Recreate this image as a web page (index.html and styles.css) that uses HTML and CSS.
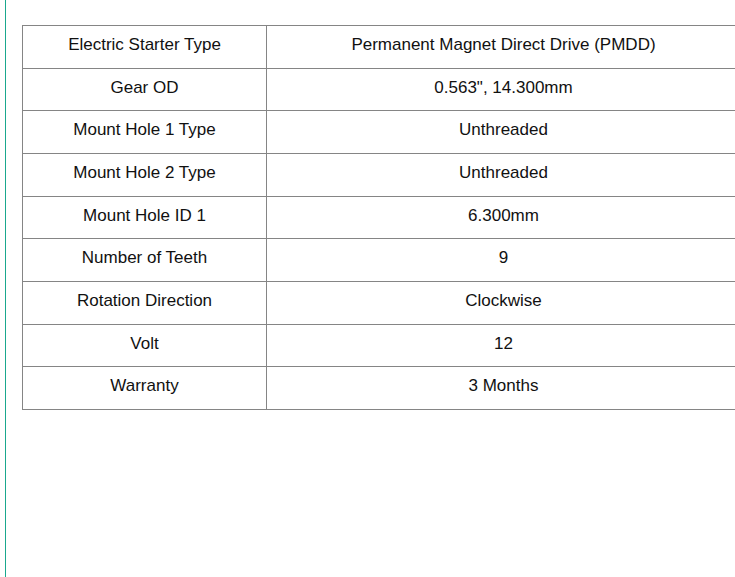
FILE: index.html
```html
<!DOCTYPE html>
<html>
<head>
<meta charset="utf-8">
<link rel="stylesheet" href="styles.css">
</head>
<body>
<div class="wrap">
  <table class="specs">
    <tr><td class="k">Electric Starter Type</td><td class="v">Permanent Magnet Direct Drive (PMDD)</td></tr>
    <tr><td class="k">Gear OD</td><td class="v">0.563", 14.300mm</td></tr>
    <tr><td class="k">Mount Hole 1 Type</td><td class="v">Unthreaded</td></tr>
    <tr><td class="k">Mount Hole 2 Type</td><td class="v">Unthreaded</td></tr>
    <tr><td class="k">Mount Hole ID 1</td><td class="v">6.300mm</td></tr>
    <tr><td class="k">Number of Teeth</td><td class="v">9</td></tr>
    <tr><td class="k">Rotation Direction</td><td class="v">Clockwise</td></tr>
    <tr><td class="k">Volt</td><td class="v">12</td></tr>
    <tr><td class="k">Warranty</td><td class="v">3 Months</td></tr>
  </table>
</div>
</body>
</html>
```
FILE: styles.css
```css
html, body {
  margin: 0;
  padding: 0;
  background: #fff;
  overflow: hidden;
}
.wrap {
  margin-left: 5px;
  border-left: 1px solid #1aa88e;
  min-height: 577px;
  box-sizing: border-box;
  padding: 25px 0 0 16px;
  width: 760px;
}
.specs {
  border-collapse: collapse;
  width: 719px;
  table-layout: fixed;
  font-family: "Liberation Sans", Arial, sans-serif;
  font-size: 17px;
  color: #111;
}
.specs td {
  border: 1px solid #858585;
  text-align: center;
  padding: 10px 0 14px;
  line-height: 17.67px;
}
.specs td.k {
  width: 243px;
}
```
